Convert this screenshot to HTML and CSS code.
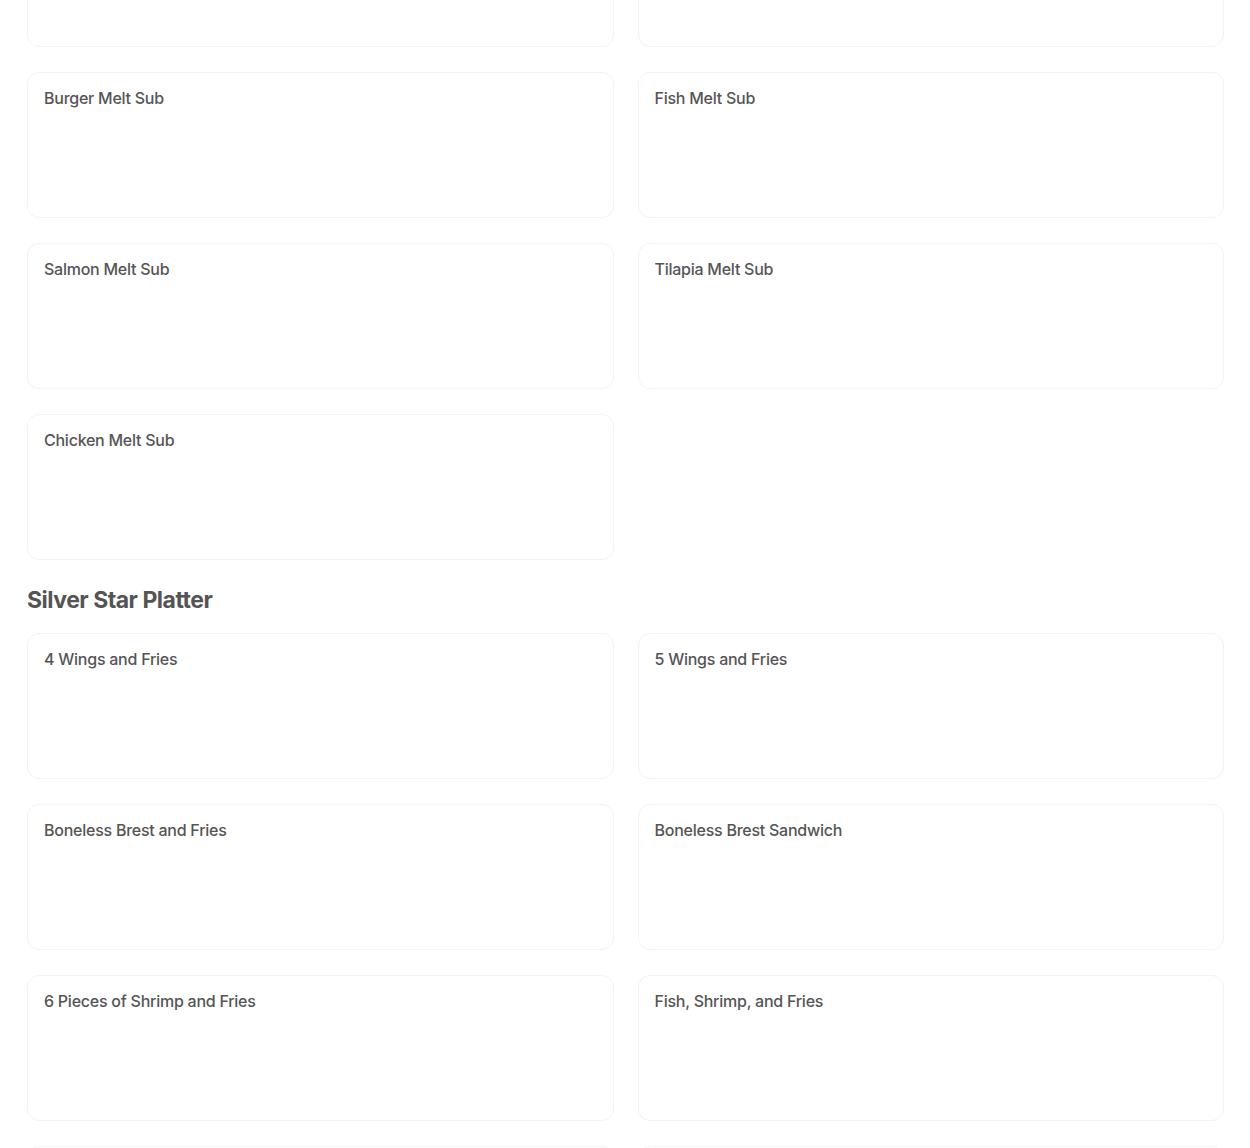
FILE: index.html
```html
<!DOCTYPE html>
<html lang="en">
<head>
  <meta charset="UTF-8" />
  <meta name="viewport" content="width=device-width, initial-scale=1.0" />
  <title>Menu</title>
  <link rel="stylesheet" href="styles.css">
</head>
<body>
  <div class="menu">
    <section class="menu-section">
      <div class="item-grid">
        <div class="item-card"></div>
        <div class="item-card"></div>
        <div class="item-card"><div class="item-name">Burger Melt Sub</div></div>
        <div class="item-card"><div class="item-name">Fish Melt Sub</div></div>
        <div class="item-card"><div class="item-name">Salmon Melt Sub</div></div>
        <div class="item-card"><div class="item-name">Tilapia Melt Sub</div></div>
        <div class="item-card"><div class="item-name">Chicken Melt Sub</div></div>
      </div>
    </section>

    <section class="menu-section">
      <h2 class="section-title">Silver Star Platter</h2>
      <div class="item-grid">
        <div class="item-card"><div class="item-name">4 Wings and Fries</div></div>
        <div class="item-card"><div class="item-name">5 Wings and Fries</div></div>
        <div class="item-card"><div class="item-name">Boneless Brest and Fries</div></div>
        <div class="item-card"><div class="item-name">Boneless Brest Sandwich</div></div>
        <div class="item-card"><div class="item-name">6 Pieces of Shrimp and Fries</div></div>
        <div class="item-card"><div class="item-name">Fish, Shrimp, and Fries</div></div>
        <div class="item-card"></div>
        <div class="item-card"></div>
      </div>
    </section>
  </div>
</body>
</html>
```

FILE: styles.css
```css
* {
  box-sizing: border-box;
}

body {
  margin: 0;
  background: #fff;
  font-family: Inter, "Noto Sans", sans-serif;
  color: #545454;
}

/* page is shown scrolled part way down the menu */
.menu {
  margin-top: -99px;
  padding: 0 26px;
}

.section-title {
  margin: 24px 0 17px 1px;
  font-size: 23px;
  line-height: 32px;
  font-weight: 700;
  letter-spacing: -0.5px;
  color: #545454;
}

.item-grid {
  display: grid;
  grid-template-columns: 1fr 1fr;
  column-gap: 24px;
  row-gap: 25px;
  padding-left: 1px;
}

.item-card {
  height: 146px;
  padding: 15px 16px;
  border: 1px solid #f3f3f3;
  border-radius: 12px;
  background: #fff;
}

.item-name {
  font-size: 16px;
  line-height: 20px;
  font-weight: 500;
  letter-spacing: -0.25px;
  color: #555;
}
```
